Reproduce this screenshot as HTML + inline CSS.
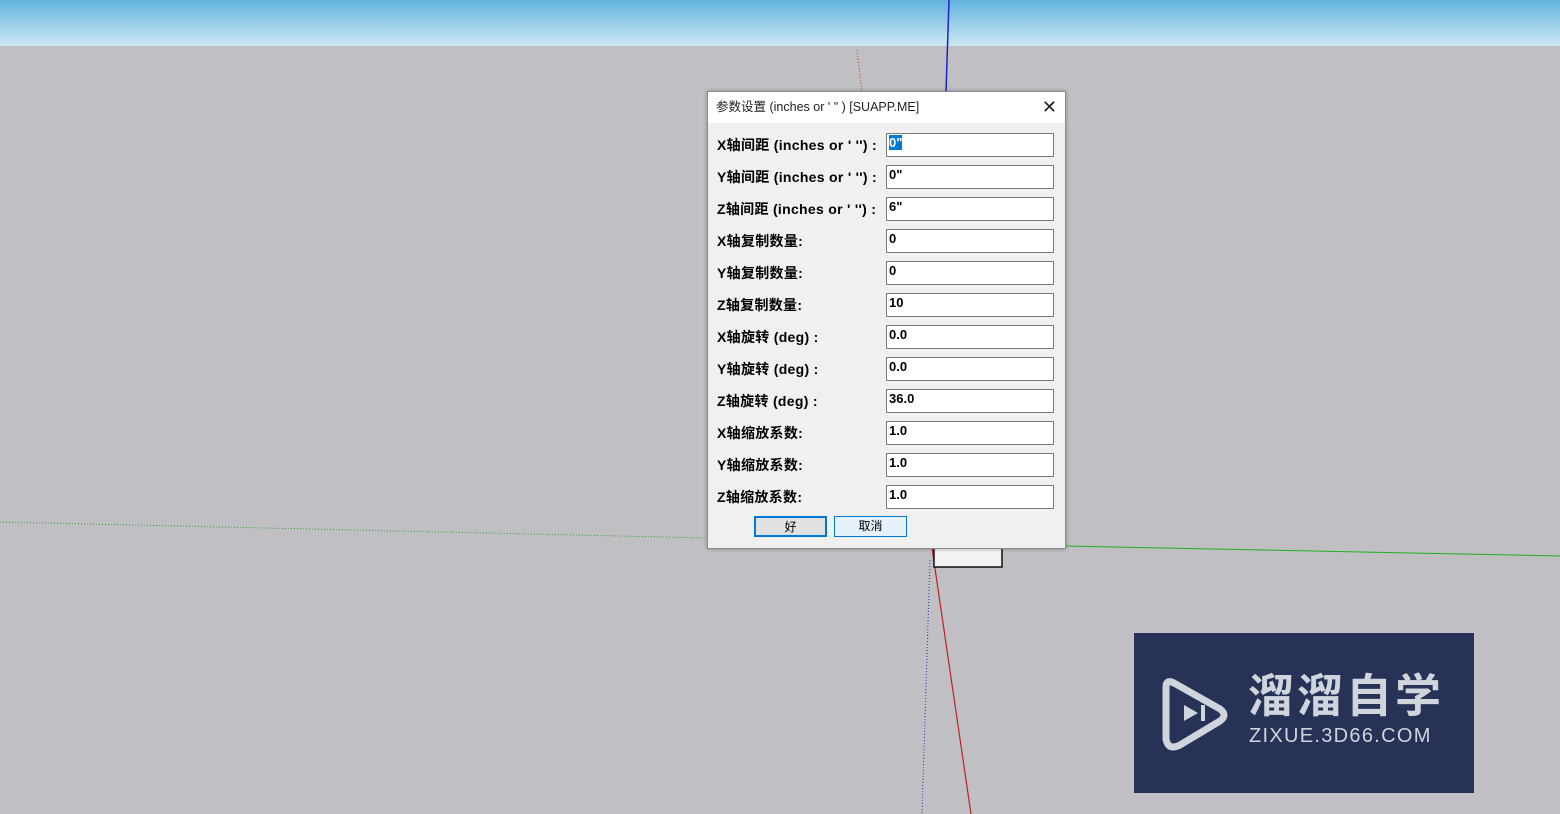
<!DOCTYPE html>
<html><head><meta charset="utf-8"><style>
body{margin:0;width:1560px;height:814px;overflow:hidden;background:#c0c0c4;position:relative;font-family:"Liberation Sans","Noto Sans CJK SC",sans-serif}
.sky{position:absolute;left:0;top:0;width:1560px;height:46px;background:linear-gradient(#62b3de,#cde8f4)}
svg.l{position:absolute;left:0;top:0}
.dlg{position:absolute;left:707px;top:91px;width:357px;height:456px;background:#f0f0f0;border:1px solid #8a8a8a;box-shadow:0 0 4px rgba(0,0,0,.3)}
.tb{height:31px;background:#fff;font-size:12.5px;color:#222;line-height:30px;padding-left:8px;position:relative}
.x{position:absolute;right:8px;top:0;font-size:18px;font-weight:300}
.row{position:absolute;left:9px;font-size:14px;font-weight:bold;color:#000;height:24px;line-height:24px;letter-spacing:0.3px}
.in{position:absolute;left:178px;width:164px;height:22px;background:#fff;border:1px solid #7a7a7a;font-size:13px;font-weight:bold;line-height:18px;padding-left:2px;box-sizing:content-box}
.btn{position:absolute;top:424px;height:19px;width:71px;border:1px solid #adadad;background:#e1e1e1;font-size:12px;text-align:center;line-height:19px}
.wm{position:absolute;left:1134px;top:633px;width:340px;height:160px;background:#263357;color:#d0d4dc}
</style></head><body>
<div class="sky"></div>
<svg class="l" width="1560" height="814">
<line x1="949" y1="0" x2="946" y2="92" stroke="#2020d0" stroke-width="1.5"/>
<line x1="857" y1="50" x2="862" y2="91" stroke="#c03030" stroke-dasharray="1,2"/>
<line x1="0" y1="522" x2="707" y2="538" stroke="#30a030" stroke-dasharray="1,2"/>
<line x1="1065" y1="546" x2="1560" y2="556" stroke="#20b020"/>
<line x1="932" y1="548" x2="971" y2="814" stroke="#c02020" stroke-width="1.2"/>
<line x1="930" y1="560" x2="922" y2="814" stroke="#3030c0" stroke-dasharray="1,2"/>
<rect x="934" y="548" width="68" height="19" fill="#f2f2f2" stroke="#111" stroke-width="1.5"/>
</svg>
<div class="dlg">
<div class="tb">参数设置 (inches or ' " ) [SUAPP.ME]<span class="x">✕</span></div>
<div class="row" style="top:41px">X轴间距 (inches or ' '') :</div><div class="in" style="top:41px"><span style="background:#0078d7;color:#fff">0"</span></div>
<div class="row" style="top:73px">Y轴间距 (inches or ' '') :</div><div class="in" style="top:73px">0"</div>
<div class="row" style="top:105px">Z轴间距 (inches or ' '') :</div><div class="in" style="top:105px">6"</div>
<div class="row" style="top:137px">X轴复制数量:</div><div class="in" style="top:137px">0</div>
<div class="row" style="top:169px">Y轴复制数量:</div><div class="in" style="top:169px">0</div>
<div class="row" style="top:201px">Z轴复制数量:</div><div class="in" style="top:201px">10</div>
<div class="row" style="top:233px">X轴旋转 (deg) :</div><div class="in" style="top:233px">0.0</div>
<div class="row" style="top:265px">Y轴旋转 (deg) :</div><div class="in" style="top:265px">0.0</div>
<div class="row" style="top:297px">Z轴旋转 (deg) :</div><div class="in" style="top:297px">36.0</div>
<div class="row" style="top:329px">X轴缩放系数:</div><div class="in" style="top:329px">1.0</div>
<div class="row" style="top:361px">Y轴缩放系数:</div><div class="in" style="top:361px">1.0</div>
<div class="row" style="top:393px">Z轴缩放系数:</div><div class="in" style="top:393px">1.0</div>
<div class="btn" style="left:46px;border:2px solid #0078d7;height:17px;width:69px">好</div>
<div class="btn" style="left:126px;border-color:#0078d7;background:#e5f1fb">取消</div>
</div>
<div class="wm">
<svg width="80" height="80" style="position:absolute;left:24px;top:42px" viewBox="0 0 80 80"><path d="M8 12 Q8 4 16 8 L62 34 Q70 40 62 46 L22 70 Q10 76 8 64 Z" fill="none" stroke="#d0d4dc" stroke-width="7" stroke-linejoin="round"/><path d="M26 30 L40 38 L26 46 Z" fill="#d0d4dc"/><rect x="43" y="30" width="4" height="16" fill="#d0d4dc"/></svg>
<div style="position:absolute;left:114px;top:38px;font-size:46px;font-weight:bold;letter-spacing:3px;line-height:50px">溜溜自学</div>
<div style="position:absolute;left:115px;top:92px;font-size:20px;letter-spacing:1.3px">ZIXUE.3D66.COM</div>
</div>
</body></html>
